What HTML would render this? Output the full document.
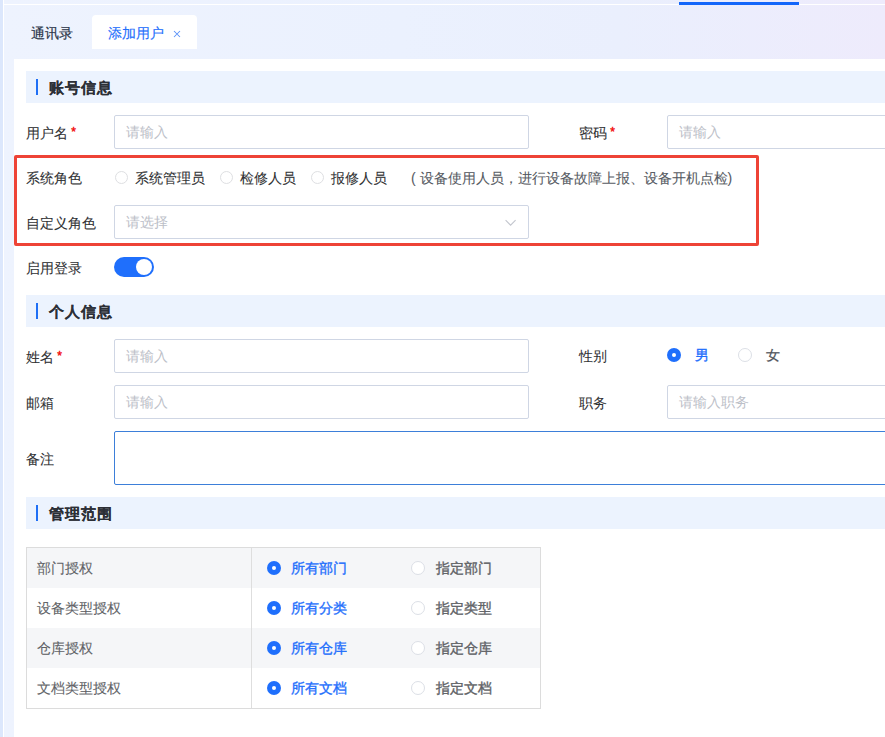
<!DOCTYPE html>
<html><head><meta charset="utf-8">
<style>
*{box-sizing:border-box;margin:0;padding:0}
html,body{width:885px;height:737px;overflow:hidden}
body{position:relative;-webkit-text-stroke:0.08px currentColor;font-family:"Liberation Sans",sans-serif;font-size:14px;color:#303133;
background:linear-gradient(90deg,#eef3fe 0%,#ebf1fe 45%,#eaeffd 70%,#eeebfc 100%)}
.a{position:absolute;white-space:nowrap}
.strip{left:0;top:0;width:3px;height:737px;background:#dce7fc}
.vline{left:3px;top:0;width:1px;height:737px;background:#fff}
.hline{left:4px;top:4px;width:881px;height:1px;background:#fff}
.topbar{left:679px;top:2px;width:120px;height:3px;background:#1366fa}
.tab1{left:31px;top:25px;line-height:16px;color:#2e384c;-webkit-text-stroke:0.2px #2e384c}
.tab2{left:92px;top:15px;width:105px;height:34px;background:#fff;border-radius:4px 4px 0 0}
.tab2 span{position:absolute;left:16px;top:10px;line-height:16px;color:#1f6ffc;-webkit-text-stroke:0.15px #1f6ffc}
.tab2 i{position:absolute;left:81px;top:15px;width:8px;height:8px;display:block}
.tab2 i svg{display:block}
.card{left:14px;top:59px;width:871px;height:678px;background:#fff}
.sec{left:26px;width:859px;height:32px;background:#ecf3fe}
.sec b{position:absolute;left:10px;top:8px;width:2px;height:16px;background:#1f6ff5}
.sec span{position:absolute;left:23px;top:8px;line-height:18px;font-size:15px;letter-spacing:1px;font-weight:bold;color:#2c2f36}
.lbl{line-height:16px;color:#303133}
.star{color:#f20d0d;font-size:12px;position:relative;top:-2px;-webkit-text-stroke:0.4px #f20d0d}
.inp{height:34px;border:1px solid #cfd6e4;border-radius:2px;background:#fff}
.inp span{position:absolute;left:11px;top:8px;line-height:16px;color:#bcc0c8;-webkit-text-stroke:0}
.radio{width:14px;height:14px;border:1px solid #dcdfe6;border-radius:50%;background:#fff}
.radio.sm{width:13px;height:13px;border-color:#dedfe2}
.radio.on{border:none;background:#1f6ffc}
.radio.on:after{content:"";position:absolute;left:5px;top:5px;width:4px;height:4px;border-radius:50%;background:#fff}
.redbox{left:14px;top:155px;width:745px;height:91px;border:3px solid #ee4336;border-radius:2px}
.sw{left:114px;top:257px;width:40px;height:20px;border-radius:10px;background:#1f6ffc}
.sw:after{content:"";position:absolute;left:22px;top:2px;width:16px;height:16px;border-radius:50%;background:#fff}
.table{left:26px;top:547px;width:515px;height:162px;border:1px solid #dcdcdc;background:#fff}
.row{position:absolute;left:0;width:513px;height:40px}
.row.g{background:#f5f6f8}
.row .c1{position:absolute;left:10px;top:12px;line-height:16px;color:#606266}
.sep{left:224px;top:0;width:1px;height:160px;background:#dedede}
.rl{line-height:16px;-webkit-text-stroke:0.35px currentColor}
.blue{color:#1f6ffc}
.gray{color:#606266}
</style></head><body>
<div class="a strip"></div>
<div class="a vline"></div>
<div class="a hline"></div>
<div class="a topbar"></div>

<div class="a tab1">通讯录</div>
<div class="a tab2"><span>添加用户</span><i><svg width="8" height="8" viewBox="0 0 8 8"><path d="M1 1L7 7M7 1L1 7" stroke="#5c92f8" stroke-width="1.05"/></svg></i></div>

<div class="a card"></div>

<!-- section 1 -->
<div class="a sec" style="top:71px"><b></b><span>账号信息</span></div>

<div class="a lbl" style="left:26px;top:125px">用户名<span class="star"> *</span></div>
<div class="a inp" style="left:114px;top:115px;width:415px"><span>请输入</span></div>
<div class="a lbl" style="left:579px;top:125px">密码<span class="star"> *</span></div>
<div class="a inp" style="left:667px;top:115px;width:240px"><span>请输入</span></div>

<div class="a lbl" style="left:26px;top:170px">系统角色</div>
<div class="a radio sm" style="left:115px;top:171px"></div>
<div class="a lbl" style="left:135px;top:170px">系统管理员</div>
<div class="a radio sm" style="left:220px;top:171px"></div>
<div class="a lbl" style="left:240px;top:170px">检修人员</div>
<div class="a radio sm" style="left:311px;top:171px"></div>
<div class="a lbl" style="left:331px;top:170px">报修人员</div>
<div class="a lbl" style="left:411px;top:170px;color:#575b63">( 设备使用人员，进行设备故障上报、设备开机点检)</div>

<div class="a lbl" style="left:26px;top:215px">自定义角色</div>
<div class="a inp" style="left:114px;top:205px;width:415px"><span>请选择</span>
<svg style="position:absolute;left:390px;top:13px" width="12" height="8" viewBox="0 0 12 8"><path d="M0.6 1.2L5.6 6.2L10.6 1.2" fill="none" stroke="#c3c6ce" stroke-width="1.1"/></svg></div>

<div class="a redbox"></div>

<div class="a lbl" style="left:26px;top:260px">启用登录</div>
<div class="a sw"></div>

<!-- section 2 -->
<div class="a sec" style="top:295px"><b></b><span>个人信息</span></div>

<div class="a lbl" style="left:26px;top:349px">姓名<span class="star"> *</span></div>
<div class="a inp" style="left:114px;top:339px;width:415px"><span>请输入</span></div>
<div class="a lbl" style="left:579px;top:348px">性别</div>
<div class="a radio on" style="left:667px;top:348px"></div>
<div class="a lbl blue rl" style="left:695px;top:347px">男</div>
<div class="a radio" style="left:738px;top:348px"></div>
<div class="a lbl rl" style="left:766px;top:347px;color:#4f535b;-webkit-text-stroke:0.25px #4f535b">女</div>

<div class="a lbl" style="left:26px;top:395px">邮箱</div>
<div class="a inp" style="left:114px;top:385px;width:415px"><span>请输入</span></div>
<div class="a lbl" style="left:579px;top:395px">职务</div>
<div class="a inp" style="left:667px;top:385px;width:240px"><span>请输入职务</span></div>

<div class="a lbl" style="left:26px;top:451px">备注</div>
<div class="a inp" style="left:114px;top:431px;width:800px;height:54px;border-color:#3d7fd9"></div>

<!-- section 3 -->
<div class="a sec" style="top:497px"><b></b><span>管理范围</span></div>

<div class="a table">
  <div class="row g" style="top:0"><span class="c1">部门授权</span></div>
  <div class="row" style="top:40px"><span class="c1">设备类型授权</span></div>
  <div class="row g" style="top:80px"><span class="c1">仓库授权</span></div>
  <div class="row" style="top:120px"><span class="c1">文档类型授权</span></div>
  <div class="a sep"></div>
</div>
<div class="a radio on" style="left:267px;top:561px"></div><div class="a rl blue" style="left:291px;top:560px">所有部门</div>
<div class="a radio" style="left:411px;top:561px"></div><div class="a rl gray" style="left:436px;top:560px">指定部门</div>
<div class="a radio on" style="left:267px;top:601px"></div><div class="a rl blue" style="left:291px;top:600px">所有分类</div>
<div class="a radio" style="left:411px;top:601px"></div><div class="a rl gray" style="left:436px;top:600px">指定类型</div>
<div class="a radio on" style="left:267px;top:641px"></div><div class="a rl blue" style="left:291px;top:640px">所有仓库</div>
<div class="a radio" style="left:411px;top:641px"></div><div class="a rl gray" style="left:436px;top:640px">指定仓库</div>
<div class="a radio on" style="left:267px;top:681px"></div><div class="a rl blue" style="left:291px;top:680px">所有文档</div>
<div class="a radio" style="left:411px;top:681px"></div><div class="a rl gray" style="left:436px;top:680px">指定文档</div>
</body></html>
